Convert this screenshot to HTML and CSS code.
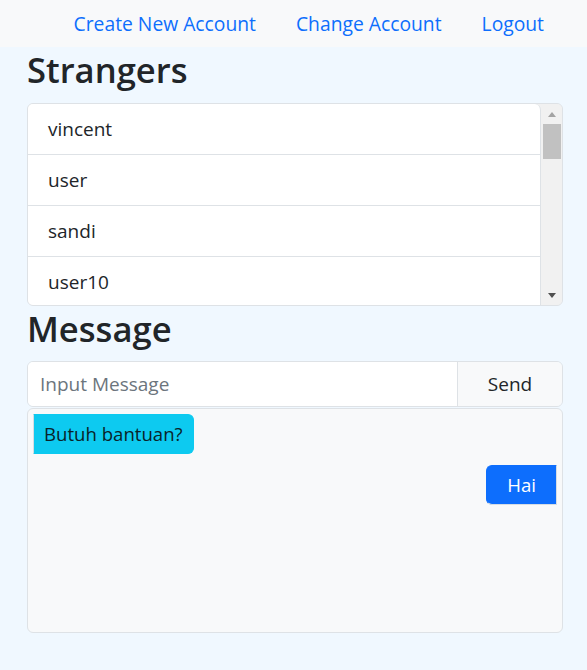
FILE: index.html
```html
<!DOCTYPE html>
<html lang="id">
<head>
<meta charset="utf-8">
<title>Chat</title>
<link rel="stylesheet" href="styles.css">
</head>
<body>
<nav class="topnav">
  <a class="nav-link" href="#">Create New Account</a>
  <a class="nav-link" href="#">Change Account</a>
  <a class="nav-link" href="#">Logout</a>
</nav>
<main class="container">
  <h1 class="section-title">Strangers</h1>
  <div class="user-box">
    <ul class="user-list">
      <li class="user-item">vincent</li>
      <li class="user-item">user</li>
      <li class="user-item">sandi</li>
      <li class="user-item">user10</li>
    </ul>
    <div class="scrollbar" aria-hidden="true">
      <span class="sb-btn"><span class="sb-arrow sb-up"></span></span>
      <span class="sb-track"><span class="sb-thumb"></span></span>
      <span class="sb-btn"><span class="sb-arrow sb-down"></span></span>
    </div>
  </div>
  <h1 class="section-title section-title-msg">Message</h1>
  <form class="input-group">
    <input class="msg-input" type="text" placeholder="Input Message">
    <button class="send-btn" type="button">Send</button>
  </form>
  <div class="chat-box">
    <div class="bubble bubble-in">Butuh bantuan?</div>
    <div class="bubble bubble-out">Hai</div>
  </div>
</main>
</body>
</html>
```
FILE: styles.css
```css
* {
  box-sizing: border-box;
}

html, body {
  margin: 0;
  padding: 0;
}

body {
  background: #f0f8ff;
  font-family: "Open Sans", "Noto Sans", sans-serif;
  font-size: 19px;
  color: #212529;
  height: 670px;
}

.topnav {
  height: 47px;
  background: #f8f9fa;
  display: flex;
  justify-content: flex-end;
  align-items: center;
  gap: 40px;
  padding-right: 43px;
}

.nav-link {
  color: #0d6efd;
  text-decoration: none;
  font-size: 19.3px;
  line-height: 26px;
}

.container {
  padding: 0 24px 0 27px;
}

.section-title {
  margin: 3px 0 13px;
  font-size: 34.6px;
  line-height: 40px;
  font-weight: 600;
  color: #212529;
}

.section-title-msg {
  margin-top: 3px;
  margin-bottom: 12px;
}

.user-box {
  display: flex;
  height: 203px;
  border: 1px solid #dee2e6;
  border-radius: 6px;
  overflow: hidden;
  background: #f1f1f1;
}

.user-list {
  flex: 1;
  margin: 0;
  padding: 0;
  list-style: none;
  background: #fff;
  border-right: 1px solid #dee2e6;
  border-radius: 0 6px 0 0;
  overflow: hidden;
}

.user-item {
  padding: 12px 20px;
  line-height: 26px;
  border-bottom: 1px solid #dee2e6;
}

.scrollbar {
  width: 21px;
  display: flex;
  flex-direction: column;
  background: #f1f1f1;
}

.sb-btn {
  height: 20px;
  display: flex;
  align-items: center;
  justify-content: center;
}

.sb-track {
  flex: 1;
  display: flex;
  flex-direction: column;
  padding: 0 1px 0 2px;
}

.sb-thumb {
  height: 35px;
  background: #c1c1c1;
}

.sb-arrow {
  width: 0;
  height: 0;
  border-left: 4.5px solid transparent;
  border-right: 4.5px solid transparent;
}

.sb-up {
  border-bottom: 5px solid #a3a3a3;
}

.sb-down {
  border-top: 5px solid #505050;
}

.input-group {
  display: flex;
  height: 46px;
  margin: 0;
  border: 1px solid #dee2e6;
  border-radius: 6px;
  overflow: hidden;
}

.msg-input {
  flex: 1;
  min-width: 0;
  border: none;
  outline: none;
  padding: 0 12px;
  font-family: inherit;
  font-size: 19px;
  color: #212529;
  background: #fff;
}

.msg-input::placeholder {
  color: #6c757d;
}

.send-btn {
  width: 105px;
  border: none;
  border-left: 1px solid #dee2e6;
  background: #f8f9fa;
  font-family: inherit;
  font-size: 19px;
  color: #212529;
  padding: 0;
}

.chat-box {
  margin-top: 1px;
  height: 225px;
  border: 1px solid #dee2e6;
  border-radius: 6px;
  background: #f8f9fa;
  padding: 5px;
  display: flex;
  flex-direction: column;
  align-items: flex-start;
}

.bubble {
  font-size: 18.6px;
  line-height: 26px;
  padding: 6px 10px;
  border: 1px solid #dee2e6;
}

.bubble-in {
  background: #0dcaf0;
  border-color: #0dcaf0 #0dcaf0 #0dcaf0 #d6dde3;
  color: #0a2329;
  border-radius: 0 6px 6px 0;
}

.bubble-out {
  align-self: flex-end;
  margin-top: 11px;
  padding: 6px 20px;
  background: #0d6efd;
  border-color: #0d6efd #d6dde3 #d6dde3 #0d6efd;
  color: #fff;
  border-radius: 6px 0 0 6px;
}
```
